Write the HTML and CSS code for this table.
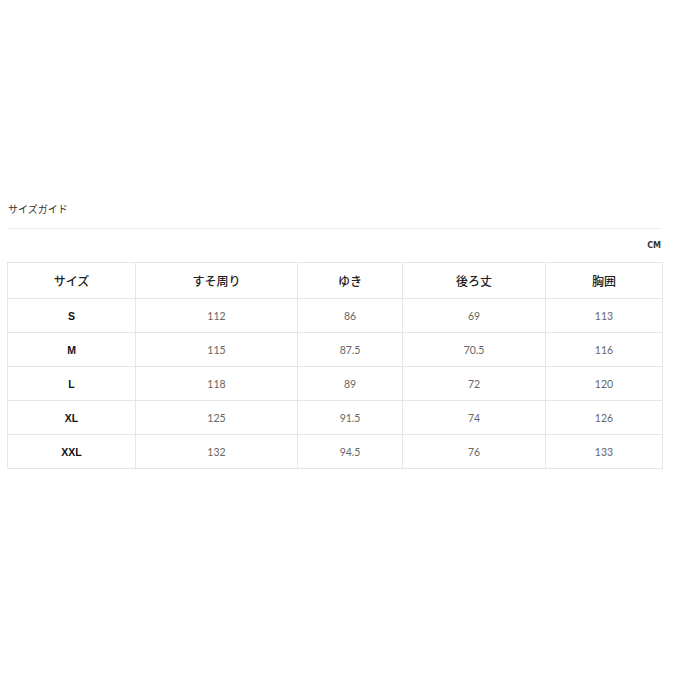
FILE: index.html
```html
<!DOCTYPE html>
<html lang="ja">
<head>
<meta charset="utf-8">
<link rel="stylesheet" href="styles.css">
</head>
<body>
<div class="guide">
  <div class="title">サイズガイド</div>
  <div class="sep"></div>
  <div class="unit">CM</div>
  <table class="tbl">
    <colgroup>
      <col class="c1"><col class="c2"><col class="c3"><col class="c4"><col class="c5">
    </colgroup>
    <thead>
      <tr><th>サイズ</th><th>すそ周り</th><th>ゆき</th><th>後ろ丈</th><th>胸囲</th></tr>
    </thead>
    <tbody>
      <tr><td class="sz">S</td><td>112</td><td>86</td><td>69</td><td>113</td></tr>
      <tr><td class="sz">M</td><td>115</td><td>87.5</td><td>70.5</td><td>116</td></tr>
      <tr><td class="sz">L</td><td>118</td><td>89</td><td>72</td><td>120</td></tr>
      <tr><td class="sz">XL</td><td>125</td><td>91.5</td><td>74</td><td>126</td></tr>
      <tr><td class="sz">XXL</td><td>132</td><td>94.5</td><td>76</td><td>133</td></tr>
    </tbody>
  </table>
</div>
</body>
</html>
```
FILE: styles.css
```css
html, body { margin: 0; padding: 0; background: #fff; }
body { font-family: "Noto Sans CJK JP", "Noto Sans", sans-serif; color: #222; }
.guide { width: 655px; margin-left: 7px; padding-top: 201px; }
.title { font-size: 10px; line-height: 16px; height: 16px; padding-left: 1px; color: #333; font-weight: 400; }
.sep { height: 1px; background: #eeeeee; margin-top: 11px; }
.unit { text-align: right; font-size: 8px; font-weight: 700; line-height: 12px; margin-top: 11px; padding-right: 1px; height: 22px; color: #333; font-family: "DejaVu Sans", sans-serif; }
.tbl { border-collapse: collapse; width: 655px; table-layout: fixed; }
.c1 { width: 128px; } .c2 { width: 162px; } .c3 { width: 105px; } .c4 { width: 143px; } .c5 { width: 117px; }
.tbl th, .tbl td { border: 1px solid #e6e6e6; text-align: center; padding: 0; }
.tbl th { height: 35px; font-size: 12px; font-weight: 500; color: #222; }
.tbl td { height: 33px; font-size: 10.5px; color: #666; font-family: "Lato", "Noto Sans", sans-serif; }
.tbl td.sz { color: #111; font-weight: 700; font-size: 10.5px; font-family: "Liberation Sans", sans-serif; }
```
